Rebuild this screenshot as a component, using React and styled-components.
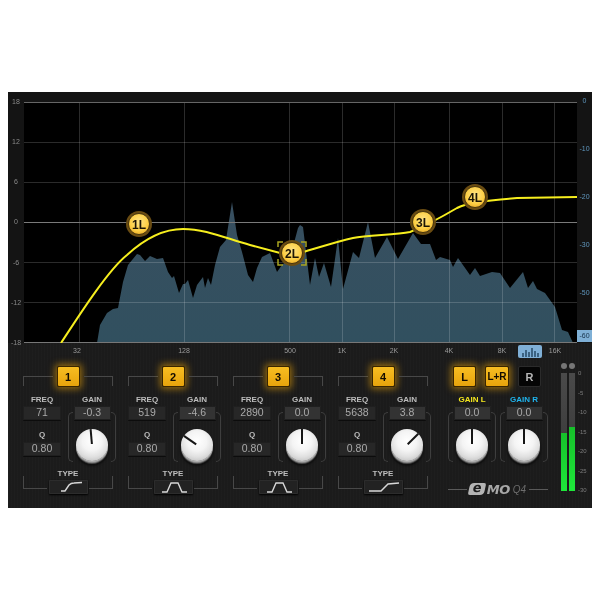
import React from 'react';
import styled, { createGlobalStyle } from 'styled-components';

const GlobalStyle = createGlobalStyle`
  html, body { margin: 0; padding: 0; background: #fff; }
  body { font-family: "Liberation Sans", Arial, sans-serif; }
`;

// curve + spectrum are traced in page coordinates, the svg viewBox shifts them back
const CURVE = 'M61 343 C 78 317 108 270 127 255 C 140 243 160 229 183 229 C 205 229 225 238 250 245 L 280 253 L 300 253 C 318 248 335 242 353 238 C 368 235 395 235 410 232 C 420 228 440 218 457 208 C 467 203 480 201 517 198 L 577 197';

const SPECTRUM = [
  [97, 343], [100, 325], [107, 313], [113, 309], [118, 308], [123, 282], [128, 265], [137, 254], [140, 255], [145, 261],
  [150, 256], [157, 259], [163, 258], [168, 272], [172, 278], [174, 276], [179, 293], [183, 284], [185, 284], [188, 280],
  [193, 298], [197, 285], [203, 277], [205, 288], [208, 278], [211, 285], [215, 265], [220, 247], [226, 240], [232, 202],
  [237, 235], [242, 252], [248, 275], [253, 282], [257, 268], [262, 257], [270, 253], [277, 272], [282, 265], [290, 258],
  [298, 228], [300, 225], [303, 227], [310, 285], [315, 258], [319, 277], [324, 263], [331, 287], [338, 238], [343, 289],
  [353, 252], [359, 258], [368, 222], [375, 258], [387, 237], [398, 259], [413, 233], [421, 244], [430, 244], [436, 260],
  [440, 257], [450, 260], [453, 267], [458, 258], [470, 275], [475, 268], [480, 276], [492, 272], [500, 273], [510, 288],
  [523, 272], [528, 288], [533, 281], [537, 289], [545, 293], [555, 307], [562, 330], [568, 332], [573, 343],
];

const H_LINES = [142, 182, 262, 302];
const V_LINES = [79, 184, 289, 342, 394, 449, 502, 554];
const NODES = [
  { id: '1L', x: 139, y: 224 },
  { id: '2L', x: 292, y: 253 },
  { id: '3L', x: 423, y: 222 },
  { id: '4L', x: 475, y: 197 },
];
const TICKS = [['32', 53], ['128', 160], ['500', 266], ['1K', 318], ['2K', 370], ['4K', 425], ['8K', 478], ['16K', 531]];

const BANDS = [
  { n: 1, freq: '71', gain: '-0.3', angle: -5, type: 'M10 11 L14 11 L18 5 Q20 3 23 3 L31 2.5' },
  { n: 2, freq: '519', gain: '-4.6', angle: -55, type: 'M6 12 L11 12 L15 3 L22 3 L26 12 L31 12' },
  { n: 3, freq: '2890', gain: '0.0', angle: 0, type: 'M6 12 L11 12 L15 3 L22 3 L26 12 L31 12' },
  { n: 4, freq: '5638', gain: '3.8', angle: 45, type: 'M3 11 L15 11 L22 4 L33 3' },
];

const METER_SCALE = ['0', '-5', '-10', '-15', '-20', '-25', '-30'];

const Page = styled.div`
  width: 600px;
  height: 600px;
  padding: 92px 8px 0;
  box-sizing: border-box;
`;

const Window = styled.div`
  width: 584px;
  height: 416px;
  display: flex;
  flex-direction: column;
  overflow: hidden;
  filter: blur(0.35px);
  background-color: #1b1b1b;
  background-image: repeating-linear-gradient(90deg, rgba(255, 255, 255, 0.012) 0 1px, transparent 1px 3px);
`;

const ChartRow = styled.div`
  display: flex;
  height: 251px;
  padding-top: 10px;
  box-sizing: border-box;
  background: #141414;
`;

const LeftScale = styled.div`
  width: 16px;
  height: 251px;
  margin-top: -5px;
  display: flex;
  flex-direction: column;
  justify-content: space-between;
  align-items: center;
  font-size: 7px;
  line-height: 10px;
  color: #8a8a8a;
`;

const Plot = styled.svg`
  display: block;
  width: 553px;
  height: 241px;
  background: #000;
`;

const RightScale = styled.div`
  width: 15px;
  margin-top: -6px;
  display: flex;
  flex-direction: column;
  gap: 38px;
  align-items: center;
`;

const DbLabel = styled.div`
  width: 15px;
  height: ${p => (p.$active ? '12px' : '10px')};
  margin-top: ${p => (p.$active ? '-6px' : '0')};
  font-size: 7px;
  line-height: ${p => (p.$active ? '12px' : '10px')};
  text-align: center;
  color: ${p => (p.$active ? '#16324a' : '#5f96bd')};
  background: ${p => (p.$active ? '#7fb0d6' : 'transparent')};
`;

const Ruler = styled.div`
  position: relative;
  height: 15px;
  margin-left: 16px;
`;

const Tick = styled.span`
  position: absolute;
  top: 3px;
  left: ${p => p.$x}px;
  width: 30px;
  margin-left: -15px;
  text-align: center;
  font-size: 7px;
  line-height: 10px;
  color: #9a9a9a;
`;

const SpectrumToggle = styled.div`
  position: absolute;
  left: 494px;
  top: 2px;
  width: 24px;
  height: 13px;
  display: flex;
  align-items: center;
  justify-content: center;
  background: #7fafd6;
  border-radius: 2px;
`;

const Controls = styled.div`
  display: flex;
  padding: 8px 0 0 15px;
  gap: 15px;
`;

const Band = styled.div`
  width: 90px;
  flex: none;
  display: flex;
  flex-direction: column;
`;

const BandHeader = styled.div`
  display: flex;
  gap: 4px;
  height: 21px;
`;

const TopCorner = styled.div`
  flex: 1;
  height: 9px;
  margin-top: 10px;
  border-top: 1px solid #484848;
  ${p => (p.$right ? 'border-right' : 'border-left')}: 1px solid #484848;
`;

const LampButton = styled.div`
  width: ${p => p.$w || 23}px;
  height: 21px;
  flex: none;
  box-sizing: border-box;
  display: flex;
  align-items: center;
  justify-content: center;
  border: 1px solid ${p => (p.$off ? '#2b2b2b' : '#3a2600')};
  border-radius: 2px;
  font-size: ${p => p.$size || 11}px;
  font-weight: bold;
  color: ${p => (p.$off ? '#b5b5b5' : '#120b00')};
  background: ${p => (p.$off ? '#050505' : 'linear-gradient(#f7bd22, #e8a40c)')};
  box-shadow: ${p => (p.$off ? 'none' : '0 0 7px 2px rgba(226, 158, 10, 0.6)')};
`;

const Params = styled.div`
  display: flex;
  justify-content: space-between;
  margin-top: 8px;
`;

const FieldColumn = styled.div`
  width: 38px;
  display: flex;
  flex-direction: column;
  align-items: stretch;
`;

const FieldLabel = styled.div`
  height: 10px;
  margin-top: ${p => p.$gap || 0}px;
  font-size: 8px;
  line-height: 10px;
  font-weight: bold;
  text-align: center;
  color: ${p => p.$color || '#bdbdbd'};
`;

const ValueBox = styled.div`
  position: relative;
  z-index: 1;
  height: 14px;
  width: ${p => p.$w || 38}px;
  margin-top: ${p => p.$top || 1}px;
  border-radius: 1px;
  text-align: center;
  font-size: 10.5px;
  line-height: 13px;
  color: #a9a9a9;
  background: ${p => (p.$light ? '#333' : '#272727')};
  box-shadow: 0 1px 0 #0c0c0c, inset 0 0 0 1px #1f1f1f;
`;

const KnobColumn = styled.div`
  width: 48px;
  margin-right: ${p => p.$over || 0}px;
  display: flex;
  flex-direction: column;
  align-items: center;
`;

const KnobFrame = styled.div`
  width: 48px;
  height: 50px;
  margin-top: -8px;
  display: flex;
  justify-content: space-between;
  align-items: flex-end;
`;

const Paren = styled.div`
  width: 5px;
  height: 50px;
  box-sizing: border-box;
  border: 1px solid #3e3e3e;
  ${p => (p.$right ? 'border-left' : 'border-right')}: 0;
  border-radius: ${p => (p.$right ? '0 5px 5px 0' : '5px 0 0 5px')};
`;

const Knob = styled.div`
  position: relative;
  width: 32px;
  height: 32px;
  margin-bottom: 1px;
  border-radius: 50%;
  background: radial-gradient(circle at 50% 38%, #ffffff 0, #f4f4f4 38%, #e0e0e0 62%, #bdbdbd 88%, #9a9a9a 100%);
  box-shadow: 0 1px 0 #b0b0b0, 0 2px 0 #8a8a8a, 0 3px 1px #555, 0 4px 3px #000;
`;

const Pointer = styled.div`
  position: absolute;
  left: 15px;
  top: 0;
  width: 2px;
  height: 15px;
  background: #161616;
  transform-origin: 1px 16px;
  transform: rotate(${p => p.$angle}deg);
`;

const TypeLabel = styled.div`
  height: 10px;
  margin-top: 7px;
  font-size: 8px;
  line-height: 10px;
  font-weight: bold;
  text-align: center;
  color: #bdbdbd;
`;

const TypeRow = styled.div`
  display: flex;
  height: 14px;
  margin-top: 1px;
  gap: 1px;
`;

const BottomCorner = styled.div`
  flex: 1;
  height: 12px;
  margin-top: -4px;
  border-bottom: 1px solid #484848;
  ${p => (p.$right ? 'border-right' : 'border-left')}: 1px solid #484848;
`;

const TypeButton = styled.div`
  width: 39px;
  height: 14px;
  margin-left: 1px;
  flex: none;
  display: flex;
  align-items: center;
  justify-content: center;
  background: #222;
  border-radius: 1px;
  box-shadow: 0 1px 2px #000, inset 0 0 0 1px #2c2c2c;
`;

const GainSection = styled.div`
  width: 100px;
  flex: none;
  margin-left: 5px;
  display: flex;
  flex-direction: column;
`;

const ChannelRow = styled.div`
  display: flex;
  gap: 9px;
  padding-left: 5px;
`;

const GainRow = styled.div`
  display: flex;
  gap: 4px;
  margin-top: 8px;
`;

const LogoRow = styled.div`
  display: flex;
  align-items: center;
  margin-top: 17px;
  height: 20px;
`;

const LogoRule = styled.div`
  flex: 1;
  height: 1px;
  background: #5a5a5a;
`;

const LogoE = styled.span`
  width: 16px;
  height: 12px;
  margin-left: 2px;
  border-radius: 4px 2px 4px 2px;
  background: #b4b4b4;
  color: #1b1b1b;
  font-family: "DejaVu Sans", sans-serif;
  font-size: 13px;
  line-height: 10px;
  font-weight: bold;
  text-align: center;
  transform: skewX(-12deg);
`;

const LogoName = styled.span`
  margin-left: 2px;
  font-family: "DejaVu Sans", sans-serif;
  font-size: 13px;
  font-weight: bold;
  font-style: italic;
  color: #a8a8a8;
  letter-spacing: -0.5px;
`;

const LogoModel = styled.span`
  margin: 0 3px;
  font-size: 10px;
  font-style: italic;
  color: #6d6d6d;
`;

const MeterSection = styled.div`
  display: flex;
  flex: none;
  margin: -3px 0 0 -2px;
  gap: 3px;
`;

const MeterBars = styled.div`
  display: grid;
  grid-template-columns: 6px 6px;
  grid-template-rows: 6px auto;
  column-gap: 2px;
  justify-items: center;
`;

const MeterLed = styled.div`
  width: 6px;
  height: 6px;
  border-radius: 50%;
  background: #767676;
`;

const MeterTrack = styled.div`
  width: 6px;
  height: 118px;
  margin-top: 4px;
  display: flex;
  flex-direction: column;
  justify-content: flex-end;
  background: linear-gradient(#4a4a4a, #333);
`;

const MeterFill = styled.div`
  background: linear-gradient(#16c02a, #1ee83a);
`;

const MeterScale = styled.div`
  height: 125px;
  margin-top: 6px;
  display: flex;
  flex-direction: column;
  justify-content: space-between;
  font-size: 6px;
  line-height: 8px;
  color: #7c7c7c;
`;

const nodeLabel = { fontFamily: '"Liberation Sans", Arial, sans-serif', fontSize: 12, fontWeight: 'bold' };

function Graph() {
  const area = `M${SPECTRUM.map(p => p.join(' ')).join(' L')} Z`;
  const s = NODES[1];
  return (
    <Plot viewBox="24 102 553 241">
      <defs>
        <linearGradient id="spec" x1="0" y1="0" x2="0" y2="1">
          <stop offset="0" stopColor="#384f60" />
          <stop offset="1" stopColor="#31505f" />
        </linearGradient>
        <radialGradient id="node" cx="0.5" cy="0.4" r="0.6">
          <stop offset="0" stopColor="#ffe486" />
          <stop offset="0.7" stopColor="#fdcf45" />
          <stop offset="1" stopColor="#eeb22c" />
        </radialGradient>
      </defs>
      <path d={area} fill="url(#spec)" />
      <g stroke="#fff" strokeOpacity="0.17" strokeWidth="1">
        {H_LINES.map(y => <line key={y} x1="24" x2="577" y1={y + 0.5} y2={y + 0.5} />)}
        {V_LINES.map(x => <line key={x} y1="102" y2="343" x1={x + 0.5} x2={x + 0.5} />)}
      </g>
      <line x1="24" x2="577" y1="102.5" y2="102.5" stroke="#666" />
      <line x1="24" x2="577" y1="222.5" y2="222.5" stroke="#7a7a7a" />
      <line x1="24" x2="577" y1="342.5" y2="342.5" stroke="#777" />
      <path d={CURVE} fill="none" stroke="#f6ee1e" strokeWidth="2" />
      <path
        d={`M${s.x - 9} ${s.y - 11} h-5 v5 M${s.x - 14} ${s.y + 6} v6 h5 M${s.x + 9} ${s.y - 11} h5 v5 M${s.x + 14} ${s.y + 6} v6 h-5`}
        fill="none"
        stroke="#a9a520"
        strokeWidth="1.5"
      />
      {NODES.map(n => (
        <g key={n.id}>
          <circle cx={n.x} cy={n.y} r="13" fill="#6a4c12" />
          <circle cx={n.x} cy={n.y} r="10.5" fill="url(#node)" stroke="#2b2008" strokeWidth="0.8" />
          <text x={n.x} y={n.y + 4.5} textAnchor="middle" fill="#1c1505" style={nodeLabel}>{n.id}</text>
        </g>
      ))}
    </Plot>
  );
}

function BarsIcon() {
  return (
    <svg width="18" height="10" viewBox="0 0 18 10">
      <path d="M2 10V6 M5 10V3 M8 10V5 M11 10V1 M14 10V4 M17 10V6" stroke="#20435f" strokeWidth="1.4" fill="none" />
    </svg>
  );
}

function KnobControl({ angle }) {
  return (
    <KnobFrame>
      <Paren />
      <Knob><Pointer $angle={angle} /></Knob>
      <Paren $right />
    </KnobFrame>
  );
}

function EqBand({ band }) {
  return (
    <Band>
      <BandHeader>
        <TopCorner />
        <LampButton>{band.n}</LampButton>
        <TopCorner $right />
      </BandHeader>
      <Params>
        <FieldColumn>
          <FieldLabel>FREQ</FieldLabel>
          <ValueBox>{band.freq}</ValueBox>
          <FieldLabel $gap={10}>Q</FieldLabel>
          <ValueBox $top={2}>0.80</ValueBox>
        </FieldColumn>
        <KnobColumn $over={-3}>
          <FieldLabel>GAIN</FieldLabel>
          <ValueBox $w={37} $light>{band.gain}</ValueBox>
          <KnobControl angle={band.angle} />
        </KnobColumn>
      </Params>
      <TypeLabel>TYPE</TypeLabel>
      <TypeRow>
        <BottomCorner />
        <TypeButton>
          <svg width="35" height="14" viewBox="0 0 35 14">
            <path d={band.type} fill="none" stroke="#d8d8d8" strokeWidth="1.4" />
          </svg>
        </TypeButton>
        <BottomCorner $right />
      </TypeRow>
    </Band>
  );
}

function GainKnob({ label, color }) {
  return (
    <KnobColumn>
      <FieldLabel $color={color}>{label}</FieldLabel>
      <ValueBox $w={37} $light>0.0</ValueBox>
      <KnobControl angle={0} />
    </KnobColumn>
  );
}

export default function App() {
  return (
    <Page>
      <GlobalStyle />
      <Window>
        <ChartRow>
          <LeftScale>
            {['18', '12', '6', '0', '-6', '-12', '-18'].map(v => <span key={v}>{v}</span>)}
          </LeftScale>
          <Graph />
          <RightScale>
            {['0', '-10', '-20', '-30', '-50'].map(v => <DbLabel key={v}>{v}</DbLabel>)}
            <DbLabel $active>-60</DbLabel>
          </RightScale>
        </ChartRow>
        <Ruler>
          {TICKS.map(([t, x]) => <Tick key={t} $x={x}>{t}</Tick>)}
          <SpectrumToggle><BarsIcon /></SpectrumToggle>
        </Ruler>
        <Controls>
          {BANDS.map(b => <EqBand key={b.n} band={b} />)}
          <GainSection>
            <ChannelRow>
              <LampButton>L</LampButton>
              <LampButton $w={24} $size={10}>L+R</LampButton>
              <LampButton $off>R</LampButton>
            </ChannelRow>
            <GainRow>
              <GainKnob label="GAIN L" color="#f3e61e" />
              <GainKnob label="GAIN R" color="#1fb4ee" />
            </GainRow>
            <LogoRow>
              <LogoRule />
              <LogoE>e</LogoE>
              <LogoName>MO</LogoName>
              <LogoModel>Q4</LogoModel>
              <LogoRule />
            </LogoRow>
          </GainSection>
          <MeterSection>
            <MeterBars>
              <MeterLed />
              <MeterLed />
              <MeterTrack><MeterFill style={{ height: 58 }} /></MeterTrack>
              <MeterTrack><MeterFill style={{ height: 64 }} /></MeterTrack>
            </MeterBars>
            <MeterScale>
              {METER_SCALE.map(v => <span key={v}>{v}</span>)}
            </MeterScale>
          </MeterSection>
        </Controls>
      </Window>
    </Page>
  );
}
